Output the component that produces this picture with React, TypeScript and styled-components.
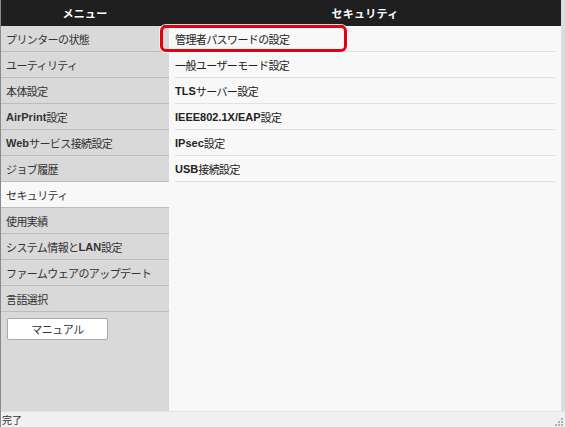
import React from "react";
import styled, { createGlobalStyle } from "styled-components";

const GlobalStyle = createGlobalStyle`
  html, body {
    margin: 0;
    padding: 0;
    overflow: hidden;
    background: #f0f0f0;
  }
  body {
    font-family: "Liberation Sans", "Noto Sans CJK JP", sans-serif;
  }
`;

const Window = styled.div`
  width: 565px;
  height: 427px;
  display: flex;
  flex-direction: column;
  box-sizing: border-box;
  border-left: 1px solid #8a8a8a;
`;

const Main = styled.div`
  flex: 1;
  display: flex;
  padding-right: 4px;
  background: #dcdcdc;
  border-bottom: 1px solid #e4e4e4;
`;

const Sidebar = styled.div`
  width: 168px;
  display: flex;
  flex-direction: column;
  background: #d9d9d9;
`;

const Content = styled.div`
  flex: 1;
  display: flex;
  flex-direction: column;
  background: #f8f8f8;
`;

const Header = styled.div`
  height: 26px;
  flex-shrink: 0;
  display: flex;
  align-items: center;
  justify-content: center;
  background: #1f1f1f;
  color: #ffffff;
  font-size: 11px;
  font-weight: 700;
  letter-spacing: 0.3px;
`;

const MenuItem = styled.div<{ $active?: boolean }>`
  height: 25px;
  display: flex;
  align-items: center;
  padding-left: 5px;
  font-size: 11px;
  color: #333333;
  letter-spacing: -0.6px;
  background: ${({ $active }) => ($active ? "#f8f8f8" : "transparent")};
  border-bottom: 1px solid #bcbcbc;
`;

const Latin = styled.span`
  font-weight: 700;
  letter-spacing: 0;
`;

const ManualButton = styled.button`
  margin: 6px 0 0 6px;
  width: 101px;
  height: 22px;
  background: #ffffff;
  border: 1px solid #a9a9a9;
  border-radius: 2px;
  font-family: inherit;
  font-size: 11px;
  color: #333333;
  letter-spacing: -0.4px;
  cursor: pointer;
`;

const SettingItem = styled.div`
  position: relative;
  height: 25px;
  display: flex;
  align-items: center;
  margin: 0 6px 0 6px;
  font-size: 11px;
  color: #222222;
  letter-spacing: -0.6px;
  border-bottom: 1px solid #e1e1e1;
`;

const Highlight = styled.div`
  position: absolute;
  left: -15px;
  top: -1px;
  width: 187px;
  height: 27px;
  box-sizing: border-box;
  border: 3px solid #e5000f;
  border-radius: 6px;
  box-shadow: 0 0 0 1px rgba(255, 255, 255, 0.85);
  pointer-events: none;
`;

const StatusBar = styled.div`
  height: 15px;
  flex-shrink: 0;
  display: flex;
  align-items: center;
  justify-content: space-between;
  padding-left: 1px;
  background: #f0f0f0;
  font-size: 10px;
  color: #333333;
`;

const Grip = styled.svg`
  width: 10px;
  height: 10px;
  margin-right: 1px;
  align-self: flex-end;
`;

const menu: { label: React.ReactNode; active?: boolean }[] = [
  { label: "プリンターの状態" },
  { label: "ユーティリティ" },
  { label: "本体設定" },
  { label: <><Latin>AirPrint</Latin>設定</> },
  { label: <><Latin>Web</Latin>サービス接続設定</> },
  { label: "ジョブ履歴" },
  { label: "セキュリティ", active: true },
  { label: "使用実績" },
  { label: <>システム情報と<Latin>LAN</Latin>設定</> },
  { label: "ファームウェアのアップデート" },
  { label: "言語選択" },
];

const settings: React.ReactNode[] = [
  "管理者パスワードの設定",
  "一般ユーザーモード設定",
  <><Latin>TLS</Latin>サーバー設定</>,
  <><Latin>IEEE802.1X/EAP</Latin>設定</>,
  <><Latin>IPsec</Latin>設定</>,
  <><Latin>USB</Latin>接続設定</>,
];

export default function App() {
  return (
    <>
      <GlobalStyle />
      <Window>
        <Main>
          <Sidebar>
            <Header>メニュー</Header>
            {menu.map((m, i) => (
              <MenuItem key={i} $active={m.active}>
                {m.label}
              </MenuItem>
            ))}
            <ManualButton type="button">マニュアル</ManualButton>
          </Sidebar>
          <Content>
            <Header>セキュリティ</Header>
            {settings.map((s, i) => (
              <SettingItem key={i}>
                {i === 0 && <Highlight />}
                {s}
              </SettingItem>
            ))}
          </Content>
        </Main>
        <StatusBar>
          <span>完了</span>
          <Grip viewBox="0 0 10 10">
            <g fill="#b0b0b0">
              <rect x="7" y="7" width="2" height="2" />
              <rect x="4" y="7" width="2" height="2" />
              <rect x="7" y="4" width="2" height="2" />
              <rect x="1" y="7" width="2" height="2" />
              <rect x="4" y="4" width="2" height="2" />
              <rect x="7" y="1" width="2" height="2" />
            </g>
          </Grip>
        </StatusBar>
      </Window>
    </>
  );
}
